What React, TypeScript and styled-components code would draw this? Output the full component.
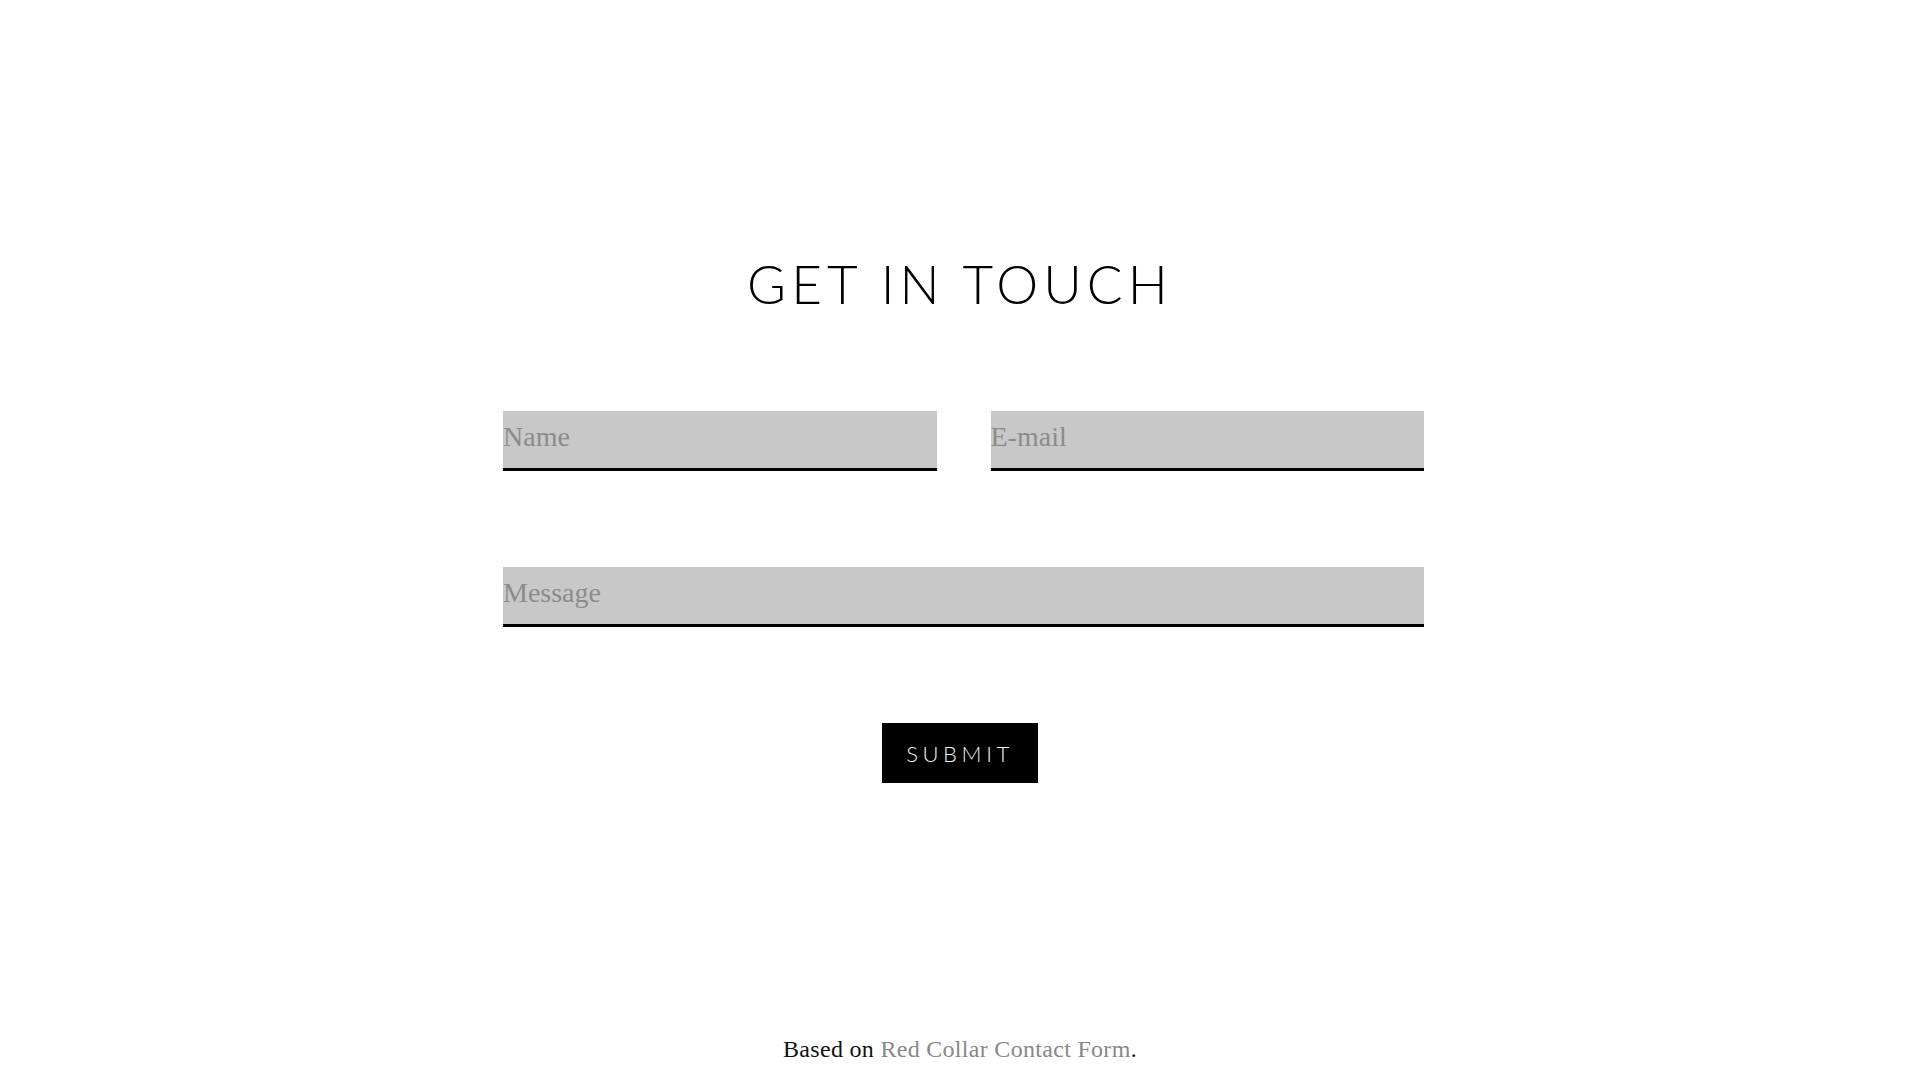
import React from 'react';
import styled, { createGlobalStyle } from 'styled-components';

const GlobalStyle = createGlobalStyle`
  html, body {
    margin: 0;
    padding: 0;
    background: #ffffff;
  }

  body {
    font-family: 'Liberation Serif', 'Times New Roman', serif;
    color: #000000;
  }

  * {
    box-sizing: border-box;
  }
`;

function App(): React.ReactElement {
  return (
    <>
      <GlobalStyle />
      <Page>
        <Title>GET IN TOUCH</Title>
        <Form onSubmit={(e) => e.preventDefault()}>
          <Row $columns={2}>
            <Field type="text" placeholder="Name" />
            <Field type="email" placeholder="E-mail" />
          </Row>
          <Row $columns={1}>
            <Field type="text" placeholder="Message" />
          </Row>
          <SubmitButton type="submit">SUBMIT</SubmitButton>
        </Form>
        <Footer>
          Based on <FooterLink href="#">Red Collar Contact Form</FooterLink>.
        </Footer>
      </Page>
    </>
  );
}

const Page = styled.main`
  display: flex;
  flex-direction: column;
  align-items: center;
  padding-top: 257px;
  min-height: 100vh;
`;

const Title = styled.h1`
  margin: 0;
  font-family: Lato, 'Open Sans', sans-serif;
  font-weight: 300;
  font-size: 53px;
  line-height: 1;
  letter-spacing: 5.1px;
  color: #000000;
`;

const Form = styled.form`
  display: flex;
  flex-direction: column;
  align-items: center;
  gap: 96px;
  width: 921px;
  margin: 101px 0 0 7px;
`;

const Row = styled.div<{ $columns: number }>`
  display: grid;
  grid-template-columns: repeat(${({ $columns }) => $columns}, 1fr);
  column-gap: 54px;
  width: 100%;
`;

const Field = styled.input`
  display: block;
  width: 100%;
  height: 60px;
  margin: 0;
  padding: 0 0 6px 0;
  border: none;
  border-bottom: 3px solid #000000;
  border-radius: 0;
  background: #c8c8c8;
  font-family: 'Liberation Serif', 'Times New Roman', serif;
  font-size: 28px;
  color: #333333;
  outline: none;

  &::placeholder {
    color: #8c8c8c;
  }
`;

const SubmitButton = styled.button`
  width: 156px;
  height: 60px;
  margin: 0 0 0 -7px;
  padding: 0;
  border: none;
  border-radius: 0;
  background: #000000;
  color: #f0f0f0;
  font-family: Lato, 'Open Sans', sans-serif;
  font-weight: 300;
  font-size: 22px;
  letter-spacing: 4.6px;
  cursor: pointer;
`;

const Footer = styled.p`
  margin: 253px 0 0 0;
  font-family: 'Liberation Serif', 'Times New Roman', serif;
  font-size: 24px;
  letter-spacing: 0.3px;
  color: #111111;
`;

const FooterLink = styled.a`
  color: #888888;
  text-decoration: none;
`;

export default App;
